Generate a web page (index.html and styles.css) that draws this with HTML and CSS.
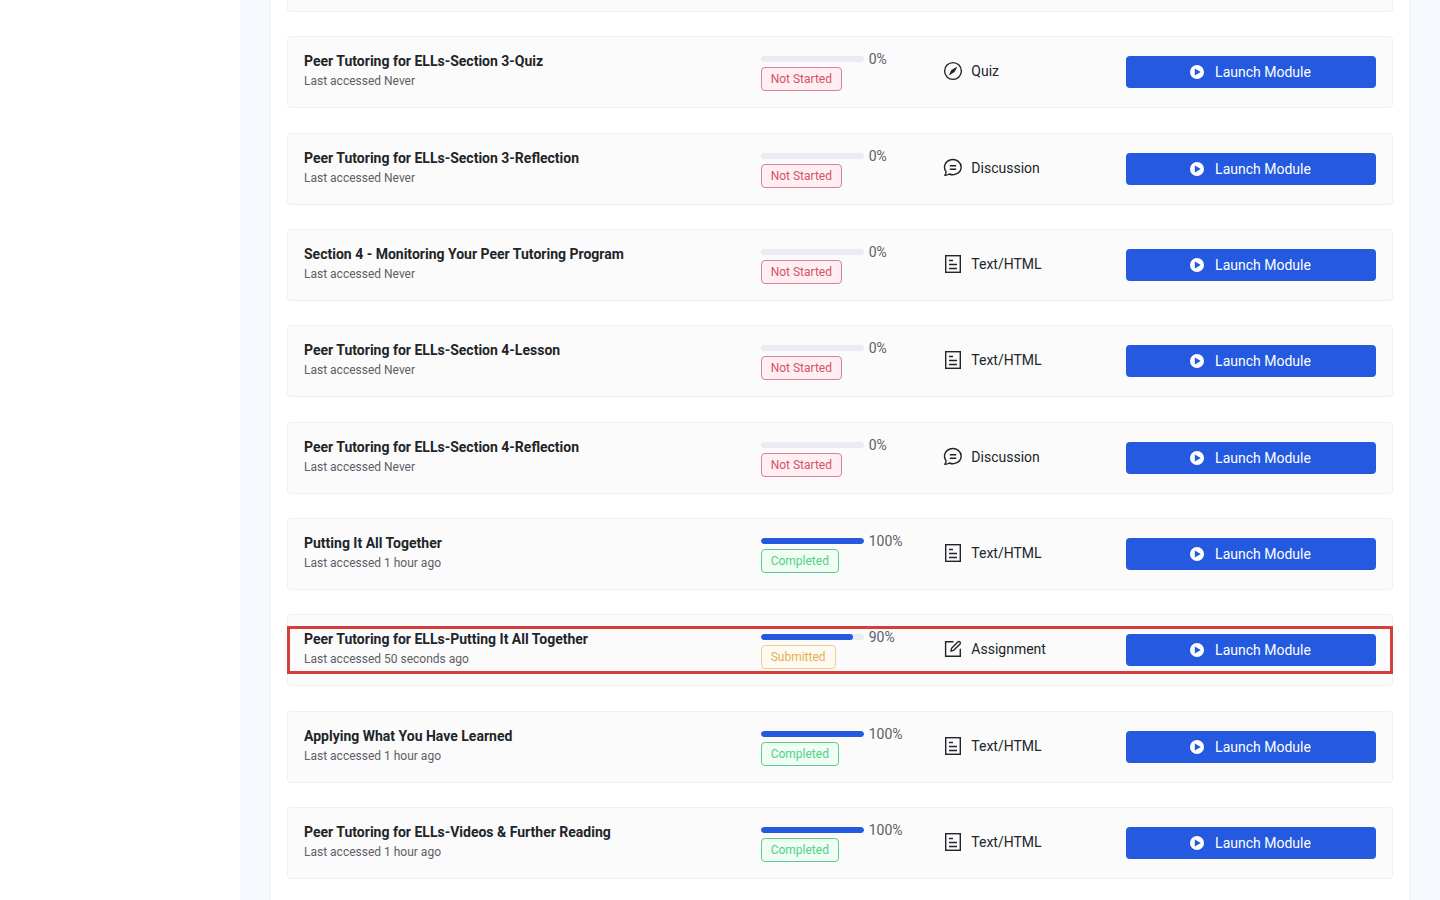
FILE: index.html
```html
<!DOCTYPE html>
<html lang="en">
<head>
    <meta charset="UTF-8">
    <meta name="viewport" content="width=device-width, initial-scale=1.0">
    <title>Peer Tutoring for ELLs - Modules</title>
    <link rel="stylesheet" href="styles.css">
</head>
<body>
    <!-- Icons shared by the module rows -->
    <svg class="icon-defs" aria-hidden="true">
        <symbol id="icon-quiz" viewBox="0 0 20 20">
            <circle cx="10" cy="10" r="8.4" fill="none" stroke="currentColor" stroke-width="1.4"/>
            <path d="M14.4 5.4 L11.6 11 L5.6 14.6 L8.4 9 Z" fill="currentColor"/>
        </symbol>
        <symbol id="icon-discussion" viewBox="0 0 20 20">
            <path d="M2.9 13.3 A8.3 7.6 0 1 1 6.3 16 Q4.4 17.4 1.8 17.3 Q3.3 15.6 2.9 13.3 Z" fill="none" stroke="currentColor" stroke-width="1.4" stroke-linejoin="round"/>
            <path d="M6.8 7.8 H13.2 M6.8 11.2 H13.2" fill="none" stroke="currentColor" stroke-width="1.4"/>
        </symbol>
        <symbol id="icon-text" viewBox="0 0 20 20">
            <rect x="2.7" y="1.7" width="14.6" height="16.6" fill="none" stroke="currentColor" stroke-width="1.4"/>
            <path d="M6 6.5 H10 M6 10.5 H14 M6 14.5 H14" fill="none" stroke="currentColor" stroke-width="1.4"/>
        </symbol>
        <symbol id="icon-assignment" viewBox="0 0 20 20">
            <path d="M10.5 2.7 H2.6 V17.3 H17.3 V9.8" fill="none" stroke="currentColor" stroke-width="1.4"/>
            <path d="M7.9 12.1 L8.6 9.2 L15 2.8 Q16 2 17 2.9 Q17.9 3.9 17.1 4.9 L10.7 11.3 Z" fill="none" stroke="currentColor" stroke-width="1.4" stroke-linejoin="round"/>
        </symbol>
        <symbol id="icon-play" viewBox="0 0 16 16">
            <path fill-rule="evenodd" d="M8 1 A7 7 0 1 0 8 15 A7 7 0 1 0 8 1 Z M5.8 4.4 L11.8 8 L5.8 11.6 Z" fill="currentColor"/>
        </symbol>
    </svg>

    <div class="layout">
        <aside class="sidebar"></aside>
        <main class="content">
            <div class="module-list" id="moduleList">
                <div class="module-end"></div>
            </div>
        </main>
    </div>

    <script src="script.js"></script>
</body>
</html>
```
FILE: styles.css
```css
* {
    box-sizing: border-box;
}
body {
    font-family: Roboto, "Liberation Sans", sans-serif;
    font-size: 14px;
    line-height: 20px;
    color: #212529;
    background-color: #fff;
    margin: 0;
}
.icon-defs {
    display: none;
}
.layout {
    display: flex;
    min-height: 100vh;
}
.sidebar {
    flex: 0 0 240px;
}
.content {
    flex: 1;
    display: flex;
    padding: 0 30px;
    background-color: #f5f9fd;
}
.module-list {
    flex: 1;
    display: flex;
    flex-direction: column;
    justify-content: space-between;
    padding: 0 16px 21px;
    background-color: #fff;
    border: 1px solid #edf1f4;
    border-width: 0 1px;
}
.module-end,
.module {
    background-color: #fbfbfb;
    border: 1px solid #edf1f2;
    border-radius: 4px;
}
.module-end {
    height: 12px;
    border-top: none;
    border-radius: 0 0 4px 4px;
}
.module {
    position: relative;
    display: grid;
    grid-template-columns: 5fr 2fr 2fr 250px;
    align-items: center;
    padding: 14px 16px 16px;
}
.module.highlight::after {
    content: "";
    position: absolute;
    inset: 11px -1px;
    border: 3px solid #d63d3d;
    pointer-events: none;
}
.module-title {
    font-size: 14px;
    font-weight: 700;
    line-height: 20px;
    margin: 0;
}
.module-accessed {
    font-size: 12px;
    color: #5c6066;
    margin: 0;
}
.progress-row {
    display: flex;
    align-items: center;
    gap: 5px;
    line-height: 16px;
    color: #5c6066;
}
.progress-bar {
    width: 103px;
    height: 6px;
    border-radius: 3px;
    background-color: #e9ecf3;
    overflow: hidden;
}
.progress-fill {
    height: 100%;
    border-radius: 3px;
    background-color: #2459e0;
}
.tag {
    display: block;
    width: fit-content;
    padding: 0 9px;
    font-size: 12px;
    line-height: 22px;
    border: 1px solid;
    border-radius: 4px;
}
.tag-not-started {
    color: #d4516c;
    background-color: #ffeff2;
    border-color: #d9809c;
}
.tag-completed {
    color: #4fd187;
    background-color: #effdf4;
    border-color: #5fc98e;
}
.tag-submitted {
    color: #e0b152;
    background-color: #fffaf0;
    border-color: #efcf91;
}
.module-type {
    display: flex;
    align-items: center;
    gap: 8px;
}
.type-icon {
    width: 20px;
    height: 20px;
}
.launch-button {
    display: flex;
    align-items: center;
    justify-content: center;
    gap: 10px;
    height: 32px;
    margin-top: 2px;
    padding: 0 8px 0 6px;
    font-family: inherit;
    font-size: 14px;
    color: #fff;
    background-color: #2459e0;
    border: none;
    border-radius: 4px;
    cursor: pointer;
}
.launch-button:hover {
    background-color: #1c49bd;
}
.play-icon {
    width: 16px;
    height: 16px;
}
```
FILE: script.js
```js
const modules = [
    { title: 'Peer Tutoring for ELLs-Section 3-Quiz', accessed: 'Never', progress: 0, type: 'Quiz' },
    { title: 'Peer Tutoring for ELLs-Section 3-Reflection', accessed: 'Never', progress: 0, type: 'Discussion' },
    { title: 'Section 4 - Monitoring Your Peer Tutoring Program', accessed: 'Never', progress: 0, type: 'Text/HTML' },
    { title: 'Peer Tutoring for ELLs-Section 4-Lesson', accessed: 'Never', progress: 0, type: 'Text/HTML' },
    { title: 'Peer Tutoring for ELLs-Section 4-Reflection', accessed: 'Never', progress: 0, type: 'Discussion' },
    { title: 'Putting It All Together', accessed: '1 hour ago', progress: 100, type: 'Text/HTML' },
    { title: 'Peer Tutoring for ELLs-Putting It All Together', accessed: '50 seconds ago', progress: 90, type: 'Assignment', highlight: true },
    { title: 'Applying What You Have Learned', accessed: '1 hour ago', progress: 100, type: 'Text/HTML' },
    { title: 'Peer Tutoring for ELLs-Videos &amp; Further Reading', accessed: '1 hour ago', progress: 100, type: 'Text/HTML' }
];

const icons = {
    'Quiz': 'icon-quiz',
    'Discussion': 'icon-discussion',
    'Text/HTML': 'icon-text',
    'Assignment': 'icon-assignment'
};

function getStatus(progress) {
    if (progress === 0) return { label: 'Not Started', css: 'tag-not-started' };
    if (progress === 100) return { label: 'Completed', css: 'tag-completed' };
    return { label: 'Submitted', css: 'tag-submitted' };
}

const list = document.getElementById('moduleList');

modules.forEach(function (item) {
    const status = getStatus(item.progress);
    const row = document.createElement('article');
    row.className = item.highlight ? 'module highlight' : 'module';
    row.innerHTML = `
        <div>
            <h3 class="module-title">${item.title}</h3>
            <p class="module-accessed">Last accessed ${item.accessed}</p>
        </div>
        <div>
            <div class="progress-row">
                <div class="progress-bar"><div class="progress-fill" style="width: ${item.progress}%"></div></div>
                <span>${item.progress}%</span>
            </div>
            <span class="tag ${status.css}">${status.label}</span>
        </div>
        <div class="module-type">
            <svg class="type-icon" aria-hidden="true"><use href="#${icons[item.type]}"/></svg>
            <span>${item.type}</span>
        </div>
        <button type="button" class="launch-button">
            <svg class="play-icon" aria-hidden="true"><use href="#icon-play"/></svg>
            Launch Module
        </button>`;
    list.appendChild(row);
});
```
